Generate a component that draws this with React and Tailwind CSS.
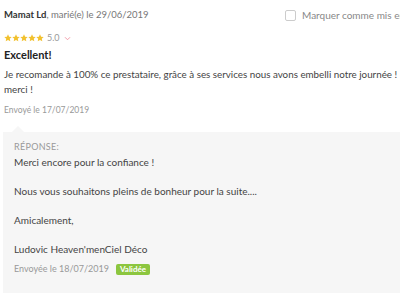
import React from 'react';

const Star = () => (
  <svg width="8" height="8" viewBox="0 0 24 24" className="fill-[#f2c12e]">
    <path d="M12 1l3.3 7 7.7.9-5.7 5.2 1.6 7.6L12 17.8l-6.9 3.9 1.6-7.6L1 8.9l7.7-.9z" />
  </svg>
);

const App = () => {
  return (
    <div className="w-[400px] h-[300px] overflow-hidden bg-white font-['Lato',sans-serif]">
      <div className="w-[420px] pl-[4px] pt-[9px]">
        <div className="flex items-center justify-between h-[12px]">
          <div className="text-[9.5px] leading-[12px] text-[#777]">
            <span className="font-bold text-[#333]">Mamat Ld</span>, marié(e) le 29/06/2019
          </div>
          <div className="w-[135px] shrink-0 flex items-center gap-[6px] text-[10px] text-[#888] whitespace-nowrap overflow-hidden">
            <span className="w-[11px] h-[11px] shrink-0 border border-[#ccc] rounded-[2px] bg-white" />
            <span>Marquer comme mis en avant</span>
          </div>
        </div>

        <div className="flex items-center mt-[13px] h-[8px]">
          <div className="flex">
            <Star /><Star /><Star /><Star /><Star />
          </div>
          <span className="text-[9px] text-[#999] ml-[3px] leading-[8px]">5.0</span>
          <svg width="7" height="5" viewBox="0 0 8 6" className="ml-[4px] stroke-[#f08a9a]" fill="none">
            <path d="M1 1.5l3 3 3-3" strokeWidth="1" />
          </svg>
        </div>

        <div className="mt-[6px] text-[11px] font-bold text-[#222] leading-[14px]">Excellent!</div>

        <p className="mt-[5px] text-[9.8px] leading-[15px] text-[#444] w-[410px]">
          Je recomande à 100% ce prestataire, grâce à ses services nous avons embelli notre journée ! merci !
        </p>

        <div className="mt-[8px] text-[8.5px] leading-[10px] text-[#999]">Envoyé le 17/07/2019</div>

        <div className="relative mt-[17px] ml-[-1px] bg-[#f6f6f6] pl-[11px] pt-[8px] pb-[16px] text-[10px] leading-[14.5px] text-[#444]">
          <span className="absolute top-[-6px] left-[9px] w-0 h-0 border-l-[6px] border-r-[6px] border-b-[6px] border-l-transparent border-r-transparent border-b-[#f6f6f6]" />
          <div className="text-[9px] uppercase text-[#999] tracking-[0.3px]">Réponse:</div>
          <div>Merci encore pour la confiance !</div>
          <div className="h-[14.5px]" />
          <div>Nous vous souhaitons pleins de bonheur pour la suite....</div>
          <div className="h-[14.5px]" />
          <div>Amicalement,</div>
          <div className="h-[14.5px]" />
          <div>Ludovic Heaven'menCiel Déco</div>
          <div className="mt-[6px] flex items-center gap-[7px]">
            <span className="text-[9px] text-[#999]">Envoyée le 18/07/2019</span>
            <span className="bg-[#8cc63f] text-white text-[8px] font-bold px-[4px] leading-[11px] rounded-[2px]">Validée</span>
          </div>
        </div>
      </div>
    </div>
  );
};

export default App;
